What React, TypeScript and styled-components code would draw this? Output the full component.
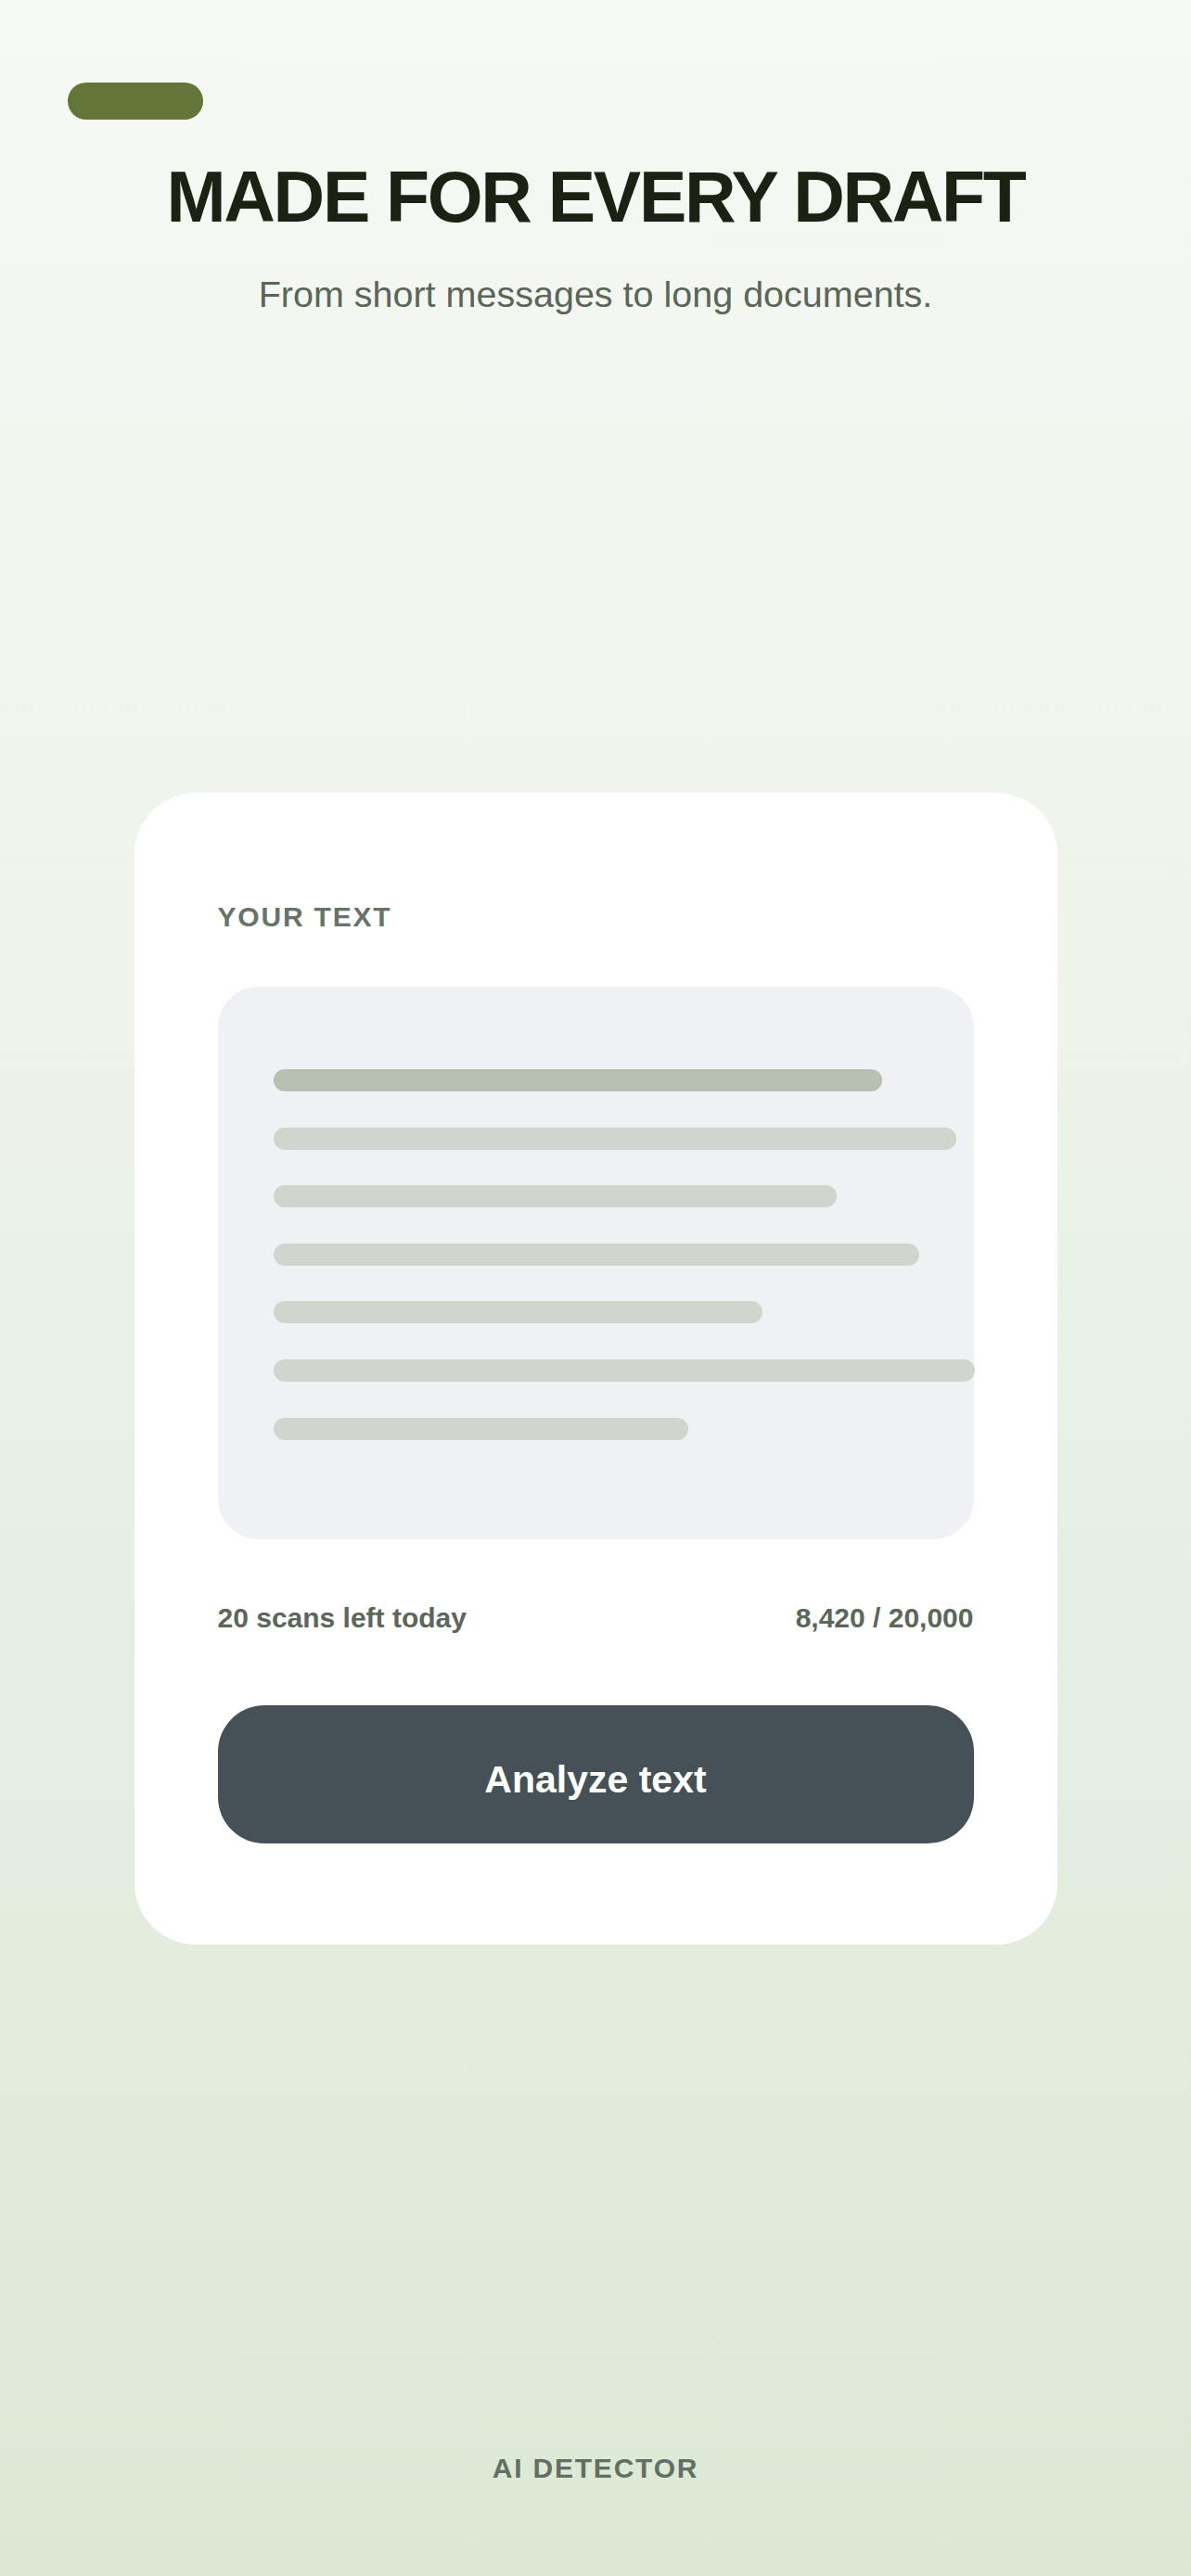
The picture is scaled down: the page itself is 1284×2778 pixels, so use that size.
import React from "react";
import styled, { createGlobalStyle } from "styled-components";

const GlobalStyle = createGlobalStyle`
  html, body {
    margin: 0;
    padding: 0;
  }
  body {
    font-family: "Liberation Sans", Arial, Helvetica, sans-serif;
    -webkit-font-smoothing: antialiased;
  }
  * { box-sizing: border-box; }
`;

const Page = styled.div`
  min-height: 100vh;
  display: flex;
  flex-direction: column;
  padding: 89px 0 98px;
  background: linear-gradient(180deg, #f7f9f4 0%, #eaf1e7 50%, #dce8d4 100%);
`;

const Header = styled.header`
  display: flex;
  flex-direction: column;
  padding: 0 73px;
`;

const Pill = styled.div`
  width: 146px;
  height: 40px;
  border-radius: 20px;
  background: #63763a;
`;

const Title = styled.h1`
  margin: 41px 0 0;
  font-size: 77px;
  line-height: 1.1;
  font-weight: 700;
  letter-spacing: -2.3px;
  color: #1b2214;
  text-align: center;
`;

const Subtitle = styled.p`
  margin: 37px 0 0;
  font-size: 39.5px;
  line-height: 1.3;
  font-weight: 400;
  color: #5a6657;
  text-align: center;
`;

const Card = styled.section`
  align-self: center;
  width: 995px;
  margin-top: 512px;
  padding: 116px 90px 109px;
  background: #ffffff;
  border-radius: 66px;
  display: flex;
  flex-direction: column;
`;

const Label = styled.div`
  font-size: 30px;
  line-height: 1.2;
  font-weight: 700;
  letter-spacing: 1.8px;
  color: #667366;
`;

const TextArea = styled.div`
  margin-top: 57px;
  height: 596px;
  padding: 89px 0 0 60px;
  background: #f0f1f5;
  border-radius: 44px;
  display: flex;
  flex-direction: column;
  gap: 38.6px;
`;

const Line = styled.div<{ $strong?: boolean }>`
  height: 24px;
  border-radius: 12px;
  background: ${(p) => (p.$strong ? "#b8c0b4" : "#d0d5cd")};
`;

const Stats = styled.div`
  margin-top: 67px;
  display: flex;
  justify-content: space-between;
  font-size: 30px;
  line-height: 1.2;
  font-weight: 700;
  color: #5c665a;
`;

const Button = styled.button`
  margin-top: 76px;
  height: 149px;
  width: 100%;
  border: none;
  border-radius: 50px;
  background: #465157;
  color: #ffffff;
  font-family: "Liberation Sans", Arial, Helvetica, sans-serif;
  font-size: 41px;
  font-weight: 700;
  padding: 12px 0 0;
  display: flex;
  align-items: center;
  justify-content: center;
`;

const Footer = styled.footer`
  margin-top: auto;
  text-align: center;
  font-size: 30px;
  line-height: 1.2;
  font-weight: 700;
  letter-spacing: 1.8px;
  color: #627063;
`;

const lines = [
  { w: 656, strong: true },
  { w: 736 },
  { w: 607 },
  { w: 696 },
  { w: 527 },
  { w: 756 },
  { w: 447 },
];

export default function App() {
  return (
    <>
      <GlobalStyle />
      <Page>
        <Header>
          <Pill />
          <Title>MADE FOR EVERY DRAFT</Title>
          <Subtitle>From short messages to long documents.</Subtitle>
        </Header>
        <Card>
          <Label>YOUR TEXT</Label>
          <TextArea>
            {lines.map((l, i) => (
              <Line key={i} $strong={l.strong} style={{ width: l.w }} />
            ))}
          </TextArea>
          <Stats>
            <span>20 scans left today</span>
            <span>8,420 / 20,000</span>
          </Stats>
          <Button>Analyze text</Button>
        </Card>
        <Footer>AI DETECTOR</Footer>
      </Page>
    </>
  );
}
